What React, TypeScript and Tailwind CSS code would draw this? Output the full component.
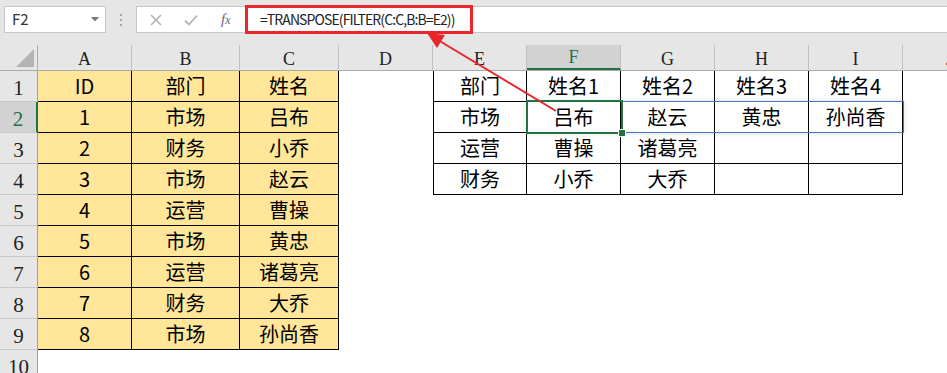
import React from "react";

const cols = [
  { k: "A", w: "w-[94px]" },
  { k: "B", w: "w-[108px]" },
  { k: "C", w: "w-[99px]" },
  { k: "D", w: "w-[94px]" },
  { k: "E", w: "w-[94px]" },
  { k: "F", w: "w-[94px]" },
  { k: "G", w: "w-[94px]" },
  { k: "H", w: "w-[94px]" },
  { k: "I", w: "w-[94px]" },
  { k: "J", w: "w-[94px]" },
];

const source = [
  ["ID", "部门", "姓名"],
  ["1", "市场", "吕布"],
  ["2", "财务", "小乔"],
  ["3", "市场", "赵云"],
  ["4", "运营", "曹操"],
  ["5", "市场", "黄忠"],
  ["6", "运营", "诸葛亮"],
  ["7", "财务", "大乔"],
  ["8", "市场", "孙尚香"],
];

const result = [
  ["部门", "姓名1", "姓名2", "姓名3", "姓名4"],
  ["市场", "吕布", "赵云", "黄忠", "孙尚香"],
  ["运营", "曹操", "诸葛亮", "", ""],
  ["财务", "小乔", "大乔", "", ""],
];

const serif = "font-['Liberation_Serif','DejaVu_Serif',serif]";
const cjk = "font-['Noto_Sans_CJK_SC',sans-serif]";

function Cell({ row, col }: { row: number; col: number }) {
  const w = cols[col].w;
  // A1:C9 yellow source table
  if (col <= 2 && row <= 9) {
    return (
      <div
        className={`${w} h-full shrink-0 flex items-center justify-center bg-[#ffe699] border-r border-b border-black text-[20px] text-black ${cjk}`}
      >
        {source[row - 1][col]}
      </div>
    );
  }
  // E1:I4 transposed result
  if (col >= 4 && col <= 8 && row <= 4) {
    return (
      <div
        className={`${w} h-full shrink-0 flex items-center justify-center bg-white border-r border-b border-black text-[20px] text-black ${cjk} ${
          col === 4 ? "border-l" : ""
        }`}
      >
        {result[row - 1][col - 4]}
      </div>
    );
  }
  return <div className={`${w} h-full shrink-0`} />;
}

export default function App() {
  const rows = [1, 2, 3, 4, 5, 6, 7, 8, 9, 10];

  return (
    <div className="relative w-[947px] h-[373px] overflow-hidden bg-white">
      {/* formula bar */}
      <div className="h-[45px] bg-[#e6e6e6] flex items-start pt-[6px] pl-[4px]">
        <div className="w-[102px] h-[27px] bg-white border border-[#c6c6c6] flex items-center justify-between pl-[7px] pr-[6px]">
          <span className={`text-[15px] text-[#333] ${cjk}`}>F2</span>
          <svg width="8" height="5" viewBox="0 0 8 5">
            <path d="M0 0 L8 0 L4 4.5 Z" fill="#777" />
          </svg>
        </div>
        <div className="w-[30px] h-[27px] flex flex-col items-center justify-center gap-[3px]">
          <span className="w-[2px] h-[2px] bg-[#a6a6a6]" />
          <span className="w-[2px] h-[2px] bg-[#a6a6a6]" />
          <span className="w-[2px] h-[2px] bg-[#a6a6a6]" />
        </div>
        <div className="flex-1 -mr-[2px] h-[27px] bg-white border border-[#c6c6c6] flex items-center">
          <div className="w-[108px] h-full flex items-center">
            <svg className="ml-[13px]" width="12" height="12" viewBox="0 0 12 12">
              <path d="M1 1 L11 11 M11 1 L1 11" stroke="#b3b3b3" strokeWidth="1.6" />
            </svg>
            <svg className="ml-[22px]" width="14" height="12" viewBox="0 0 14 12">
              <path d="M1 6.5 L5 10.5 L13 1.5" stroke="#b3b3b3" strokeWidth="1.8" fill="none" />
            </svg>
            <span className={`ml-[23px] text-[15px] italic text-[#6b6b6b] ${serif}`}>
              f<span className="text-[12px]">x</span>
            </span>
          </div>
          <div className="w-[228px] h-[29px] -my-[1px] border-[3px] border-[#e8262b] flex items-center pl-[12px]">
            <span className={`text-[14px] tracking-[-0.9px] text-[#222] whitespace-nowrap ${cjk}`}>
              =TRANSPOSE(FILTER(C:C,B:B=E2))
            </span>
          </div>
        </div>
      </div>

      {/* sheet */}
      <div className="relative">
        {/* column headers */}
        <div className="flex h-[26px] bg-[#e6e6e6] border-b border-[#ababab]">
          <div className="w-[38px] shrink-0 h-full border-r border-[#ababab] flex items-end justify-end pr-[3px] pb-[3px]">
            <svg width="18" height="18" viewBox="0 0 18 18">
              <path d="M18 0 L18 18 L0 18 Z" fill="#b4b4b4" />
            </svg>
          </div>
          {cols.map((c) => (
            <div
              key={c.k}
              className={`${c.w} shrink-0 h-full flex items-end justify-center pb-[2px] border-r border-[#c0c0c0] text-[18px] leading-none ${serif} ${
                c.k === "F"
                  ? "bg-[#d2d2d2] text-[#217346] border-b-2 border-b-[#217346]"
                  : "text-[#222]"
              }`}
            >
              {c.k}
            </div>
          ))}
        </div>

        {rows.map((r) => (
          <div key={r} className="flex h-[31px]">
            <div
              className={`w-[38px] shrink-0 h-full flex items-end justify-center pb-[2px] border-b border-[#c8c8c8] text-[21px] leading-none ${serif} ${
                r === 2
                  ? "bg-[#d2d2d2] text-[#217346] border-r-2 border-r-[#217346]"
                  : "bg-[#e6e6e6] text-[#222] border-r border-r-[#9f9f9f]"
              }`}
            >
              {r}
            </div>
            {cols.map((c, i) => (
              <Cell key={c.k} row={r} col={i} />
            ))}
          </div>
        ))}

        {/* spill range F2:I2 */}
        <div className="absolute left-[526px] top-[56px] w-[378px] h-[32px] border border-[#4472c4] shadow-[0_0_6px_rgba(0,0,0,0.12)]" />
        {/* active cell F2 */}
        <div className="absolute left-[526px] top-[55px] w-[97px] h-[34px] border-2 border-[#217346]">
          <div className="absolute -right-[4px] -bottom-[4px] w-[6px] h-[6px] bg-[#217346] outline outline-1 outline-white" />
        </div>
      </div>

      {/* annotation arrow */}
      <svg className="absolute left-0 top-0 pointer-events-none" width="947" height="373" viewBox="0 0 947 373">
        <line x1="556" y1="111" x2="438" y2="40" stroke="#e8262b" strokeWidth="2" />
        <polygon points="427,33 437,48 445,35" fill="#e8262b" />
      </svg>
    </div>
  );
}
